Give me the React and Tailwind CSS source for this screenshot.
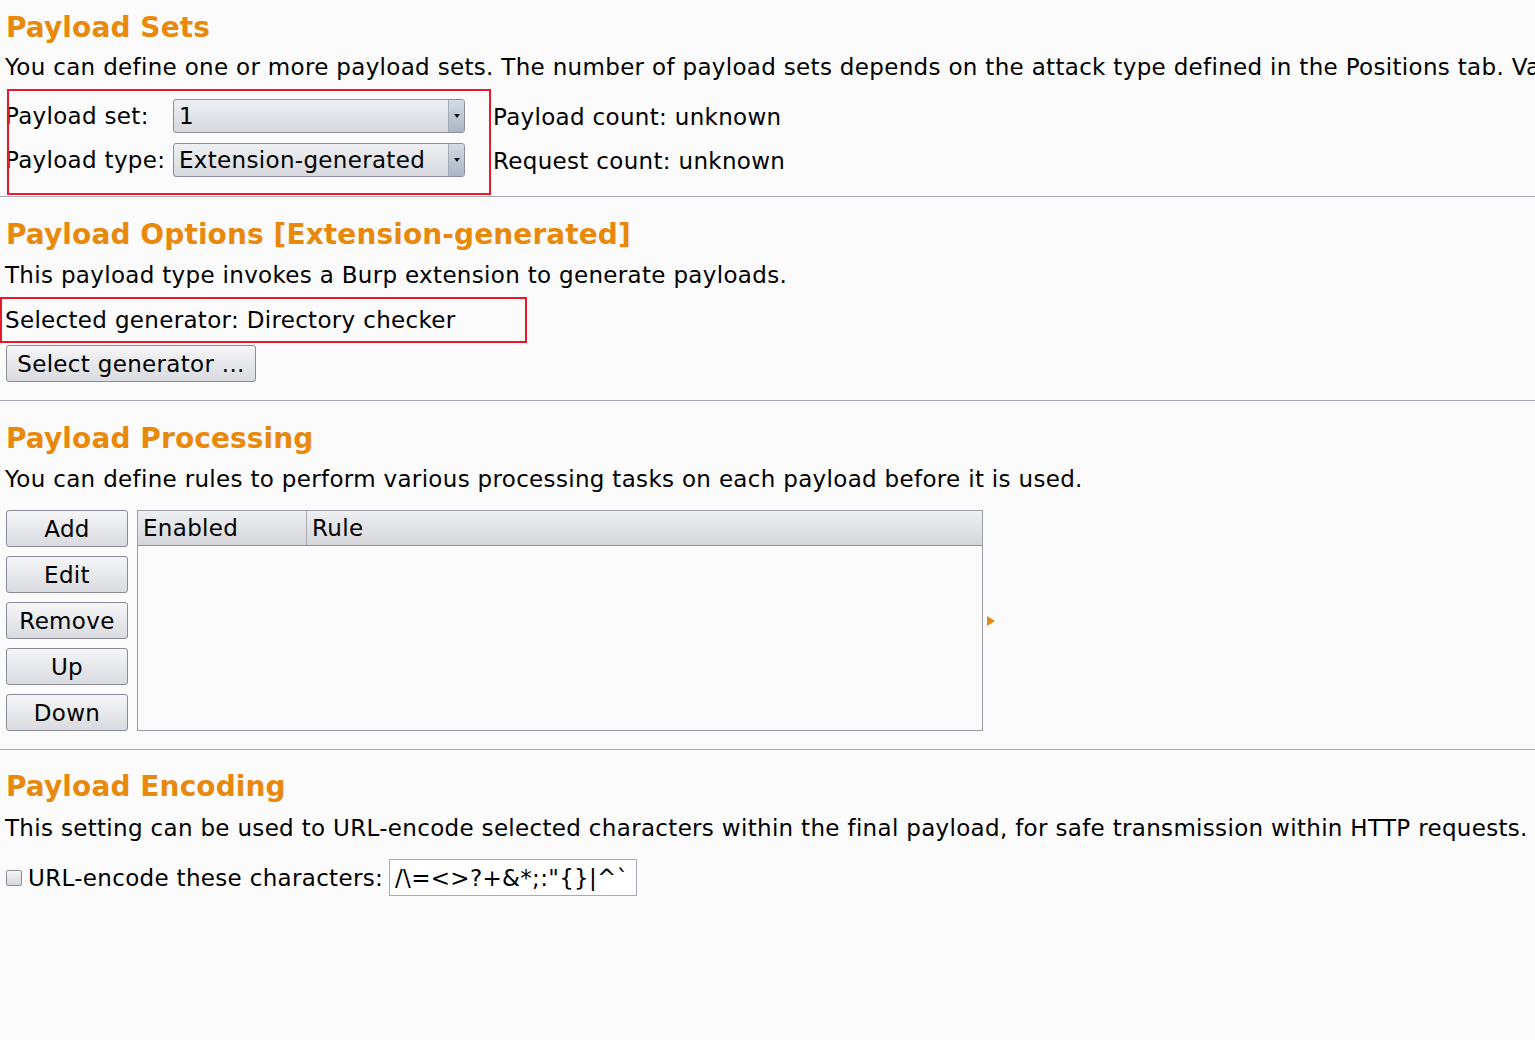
import React from 'react'

const Heading = ({ children, className = '' }) => (
    <h2 className={`h-[32px] leading-[32px] pl-[6px] text-[28px] font-bold tracking-[0.1px] text-[#e8890c] ${className}`}>{children}</h2>
)

const Line = ({ children, className = '' }) => (
    <p className={`h-[30px] leading-[30px] pl-[5px] whitespace-nowrap ${className}`}>{children}</p>
)

const Divider = ({ className = '' }) => <div className={`h-px bg-[#a9aab4] ${className}`} />

const Combo = ({ value }) => (
    <div className="flex h-[34px] w-[292px] overflow-hidden rounded-[3px] border border-[#8e8f99] bg-gradient-to-b from-[#eff0f3] to-[#d6d8de]">
        <span className="flex-1 pl-[5px] leading-[33px]">{value}</span>
        <span className="flex w-[16px] items-center justify-center border-l border-[#a3acb8] bg-gradient-to-b from-[#d3dbe5] to-[#a9b6c6]">
            <svg width="6" height="4" viewBox="0 0 6 4">
                <path d="M0 0h6L3 4z" fill="#111" />
            </svg>
        </span>
    </div>
)

const Button = ({ children, className = '' }) => (
    <button className={`h-[37px] rounded-[3px] border border-[#8a8b94] bg-gradient-to-b from-[#f6f6f8] to-[#d9dbe0] leading-[36px] tracking-[0.32px] text-black ${className}`}>
        {children}
    </button>
)

export default function App() {
    return (
        <div
            className="h-[1040px] w-[1535px] overflow-hidden bg-[#fbfbfb] text-[23px] tracking-[0.32px] text-black"
            style={{ fontFamily: '"DejaVu Sans", Verdana, sans-serif' }}
        >
            {/* Payload Sets */}
            <Heading className="mt-[12px]">Payload Sets</Heading>
            <Line className="mt-[8px]">
                You can define one or more payload sets. The number of payload sets depends on the attack type defined in the Positions tab. Va
            </Line>
            <div className="relative mt-[17px] flex gap-[28px]">
                <div className="flex w-[465px] flex-col gap-[10px] pl-[5px]">
                    <div className="flex h-[34px] items-center">
                        <span className="w-[168px] whitespace-nowrap leading-[36px]">Payload set:</span>
                        <Combo value="1" />
                    </div>
                    <div className="flex h-[34px] items-center">
                        <span className="w-[168px] whitespace-nowrap leading-[36px]">Payload type:</span>
                        <Combo value="Extension-generated" />
                    </div>
                </div>
                <div className="flex flex-col gap-[10px] whitespace-nowrap">
                    <span className="h-[34px] leading-[36px]">Payload count: unknown</span>
                    <span className="h-[34px] leading-[36px]">Request count: unknown</span>
                </div>
                <div className="pointer-events-none absolute left-[7px] top-[-10px] h-[106px] w-[484px] border-2 border-[#e8192c]" />
            </div>
            <Divider className="mt-[19px]" />

            {/* Payload Options */}
            <Heading className="mt-[22px]">Payload Options [Extension-generated]</Heading>
            <Line className="mt-[9px]">This payload type invokes a Burp extension to generate payloads.</Line>
            <div className="mt-[7px] h-[46px] w-[527px] border-2 border-[#e8192c] pl-[3px] leading-[42px] whitespace-nowrap">
                Selected generator: Directory checker
            </div>
            <Button className="ml-[6px] mt-[2px] w-[250px]">Select generator ...</Button>
            <Divider className="mt-[18px]" />

            {/* Payload Processing */}
            <Heading className="mt-[22px]">Payload Processing</Heading>
            <Line className="mt-[9px]">You can define rules to perform various processing tasks on each payload before it is used.</Line>
            <div className="mt-[16px] flex items-start pl-[6px]">
                <div className="flex w-[122px] flex-col gap-[9px]">
                    <Button>Add</Button>
                    <Button>Edit</Button>
                    <Button>Remove</Button>
                    <Button>Up</Button>
                    <Button>Down</Button>
                </div>
                <div className="ml-[9px] flex h-[221px] w-[846px] flex-col border border-[#9a9ba3] bg-[#fbfbfb]">
                    <div className="flex h-[35px] border-b border-[#8e8f99] bg-gradient-to-b from-[#eeeff1] to-[#d4d6db]">
                        <span className="w-[169px] border-r border-[#a9aab3] pl-[5px] leading-[34px]">Enabled</span>
                        <span className="flex-1 pl-[5px] leading-[34px]">Rule</span>
                    </div>
                </div>
                <div className="ml-[4px] flex h-[221px] items-center">
                    <svg width="9" height="10" viewBox="0 0 9 10">
                        <path d="M0 0L8 5L0 10z" fill="#e8890c" />
                    </svg>
                </div>
            </div>
            <Divider className="mt-[18px]" />

            {/* Payload Encoding */}
            <Heading className="mt-[21px]">Payload Encoding</Heading>
            <Line className="mt-[10px]">
                This setting can be used to URL-encode selected characters within the final payload, for safe transmission within HTTP requests.
            </Line>
            <div className="mt-[16px] flex h-[37px] items-center pl-[6px]">
                <span className="h-[16px] w-[16px] rounded-[2px] border border-[#8a8b94] bg-gradient-to-b from-[#f4f4f6] to-[#d5d7dc]" />
                <span className="ml-[6px] w-[361px] whitespace-nowrap leading-[38px]">URL-encode these characters:</span>
                <div className="h-[37px] w-[248px] border border-[#a9aab3] bg-white pl-[5px] leading-[36px] whitespace-nowrap">
                    {'/\\=<>?+&*;:"{}|^`'}
                </div>
            </div>
        </div>
    )
}
